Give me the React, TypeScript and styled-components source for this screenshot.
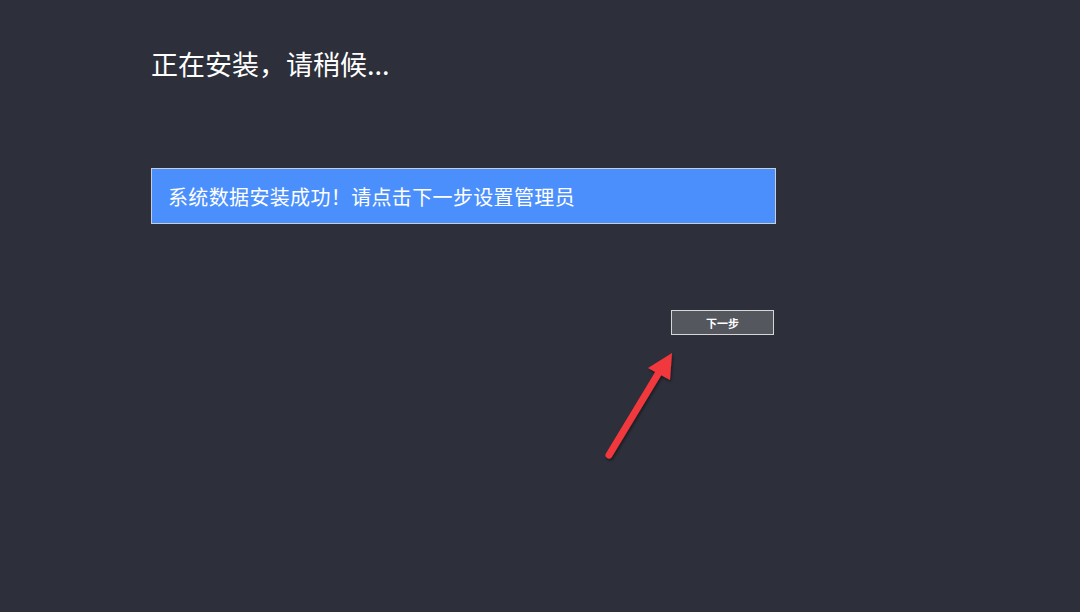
import React from 'react';
import styled, { createGlobalStyle } from 'styled-components';

const GlobalStyle = createGlobalStyle`
  html, body {
    margin: 0;
    padding: 0;
    background: #2d2f3a;
  }
  body {
    font-family: "Noto Sans CJK SC", "Liberation Sans", sans-serif;
  }
`;

const Page = styled.div({
  position: 'relative',
  width: '1080px',
  height: '612px',
  background: '#2d2f3a',
  padding: '42px 0 0 151px',
  boxSizing: 'border-box',
  display: 'flex',
  flexDirection: 'column',
  overflow: 'hidden',
});

const Title = styled.h1({
  margin: 0,
  fontSize: '27px',
  fontWeight: 400,
  lineHeight: '44px',
  color: '#ffffff',
});

const Notice = styled.div({
  marginTop: '82px',
  width: '625px',
  height: '56px',
  boxSizing: 'border-box',
  border: '1px solid #c9cdd6',
  background: '#4b8ffc',
  color: '#ffffff',
  fontSize: '20px',
  letterSpacing: '0.35px',
  display: 'flex',
  alignItems: 'center',
  paddingLeft: '16px',
});

const Actions = styled.div({
  width: '623px',
  display: 'flex',
  justifyContent: 'flex-end',
  marginTop: '86px',
});

const NextButton = styled.button({
  width: '103px',
  height: '25px',
  boxSizing: 'border-box',
  border: '1px solid #d6d6d6',
  background: '#55575f',
  color: '#ffffff',
  fontFamily: '"Noto Sans CJK SC", sans-serif',
  fontSize: '11px',
  fontWeight: 700,
  padding: 0,
  cursor: 'pointer',
});

const Arrow = styled.svg({
  position: 'absolute',
  left: '590px',
  top: '340px',
  overflow: 'visible',
});

const App: React.FC = () => {
  return (
    <Page>
      <GlobalStyle />
      <Title>正在安装，请稍候...</Title>
      <Notice>系统数据安装成功！请点击下一步设置管理员</Notice>
      <Actions>
        <NextButton>下一步</NextButton>
      </Actions>
      <Arrow width="100" height="130" viewBox="0 0 100 130">
        <defs>
          <filter id="sh" x="-20%" y="-20%" width="140%" height="140%">
            <feDropShadow dx="1" dy="2" stdDeviation="1.5" floodColor="#000" floodOpacity="0.45" />
          </filter>
        </defs>
        <g filter="url(#sh)">
          <line x1="19" y1="115" x2="68" y2="34" stroke="#f0393d" strokeWidth="7" strokeLinecap="round" />
          <polygon points="82,13 58,28 80,40" fill="#f0393d" />
        </g>
      </Arrow>
    </Page>
  );
};

export default App;
